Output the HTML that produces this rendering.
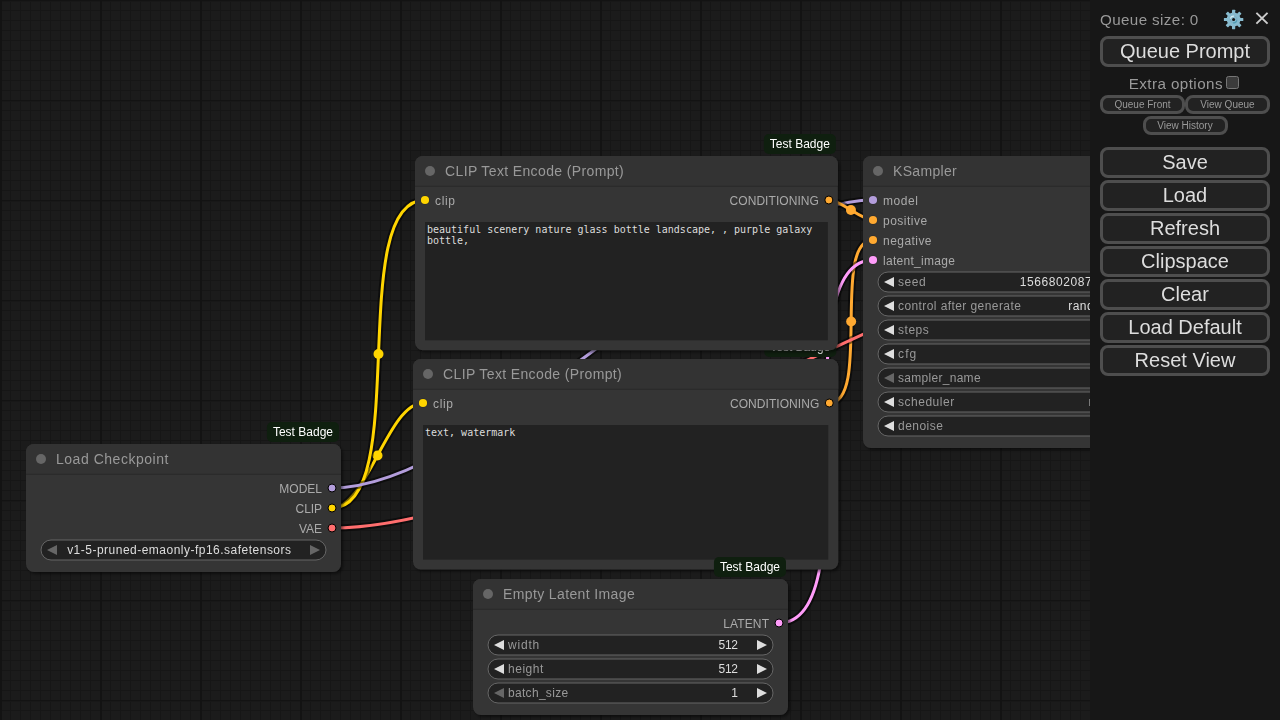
<!DOCTYPE html>
<html><head><meta charset="utf-8"><title>ComfyUI</title>
<style>
html,body{margin:0;padding:0;width:1280px;height:720px;overflow:hidden;background:#171717}
body{position:relative;font-family:"Liberation Sans",sans-serif}
.ta{position:absolute;box-sizing:border-box;margin:0;border:0;outline:0;resize:none;background:transparent;padding:2px;color:#ddd;font:10px/11px "DejaVu Sans Mono","Liberation Mono",monospace;white-space:pre-wrap;overflow:hidden}
.menu{will-change:transform;position:absolute;left:1090px;top:0;width:190px;height:720px;background:#171717;color:#999;font-size:15px}
.menu *{box-sizing:border-box}
.menu button{margin:0;font-family:"Liberation Sans",sans-serif;cursor:pointer;white-space:nowrap}
.menu .b{position:absolute;left:10px;width:170px;height:31px;border:3px solid #4e4e4e;border-radius:8px;background:#222;color:#ddd;font-size:20px;line-height:23px;text-align:center;padding:1px 6px}
.menu .s{position:absolute;width:85px;height:19px;border:3px solid #4e4e4e;border-radius:8px;background:#222;color:#999;font-size:10px;line-height:11px;text-align:center;padding:1px 0}

</style></head><body>
<svg width="1090" height="720" viewBox="0 0 1090 720" style="position:absolute;left:0;top:0;opacity:.999;font-family:'Liberation Sans',sans-serif"><defs>
<pattern id="grid" width="100" height="100" patternUnits="userSpaceOnUse">
<rect width="100" height="100" fill="#1b1b1b"/>
<path d="M10.5 0V100M20.5 0V100M30.5 0V100M40.5 0V100M50.5 0V100M60.5 0V100M70.5 0V100M80.5 0V100M90.5 0V100M0 10.5H100M0 20.5H100M0 30.5H100M0 40.5H100M0 50.5H100M0 60.5H100M0 70.5H100M0 80.5H100M0 90.5H100" stroke="#161616" stroke-width="1"/>
<path d="M1 0V100" stroke="#131313" stroke-width="2"/><path d="M0 .5H100" stroke="#131313" stroke-width="1"/><path d="M2 1.5H100" stroke="#181818" stroke-width="1"/>
</pattern>
<filter id="sh" x="-5%" y="-5%" width="110%" height="115%"><feDropShadow dx="2" dy="2" stdDeviation="1.5" flood-color="#000" flood-opacity="0.5"/></filter>
</defs><rect width="1090" height="720" fill="url(#grid)"/><path d="M332.00 508.00C366.74 508.00 388.26 403.00 423.00 403.00" stroke="rgba(0,0,0,0.5)" stroke-width="7" fill="none"/><path d="M332.00 508.00C366.74 508.00 388.26 403.00 423.00 403.00" stroke="#FFD500" stroke-width="3" fill="none"/><circle cx="377.50" cy="455.50" r="5" fill="#FFD500"/><path d="M332.00 508.00C412.43 508.00 344.57 200.00 425.00 200.00" stroke="rgba(0,0,0,0.5)" stroke-width="7" fill="none"/><path d="M332.00 508.00C412.43 508.00 344.57 200.00 425.00 200.00" stroke="#FFD500" stroke-width="3" fill="none"/><circle cx="378.50" cy="354.00" r="5" fill="#FFD500"/><path d="M332.00 488.00C485.22 488.00 719.78 200.00 873.00 200.00" stroke="rgba(0,0,0,0.5)" stroke-width="7" fill="none"/><path d="M332.00 488.00C485.22 488.00 719.78 200.00 873.00 200.00" stroke="#B39DDB" stroke-width="3" fill="none"/><circle cx="602.50" cy="344.00" r="5" fill="#B39DDB"/><path d="M828.85 200.00C840.96 200.00 860.88 220.00 873.00 220.00" stroke="rgba(0,0,0,0.5)" stroke-width="7" fill="none"/><path d="M828.85 200.00C840.96 200.00 860.88 220.00 873.00 220.00" stroke="#FFA931" stroke-width="3" fill="none"/><circle cx="850.92" cy="210.00" r="5" fill="#FFA931"/><path d="M829.28 403.00C871.47 403.00 830.81 240.00 873.00 240.00" stroke="rgba(0,0,0,0.5)" stroke-width="7" fill="none"/><path d="M829.28 403.00C871.47 403.00 830.81 240.00 873.00 240.00" stroke="#FFA931" stroke-width="3" fill="none"/><circle cx="851.14" cy="321.50" r="5" fill="#FFA931"/><path d="M779.00 623.00C872.74 623.00 779.26 260.00 873.00 260.00" stroke="rgba(0,0,0,0.5)" stroke-width="7" fill="none"/><path d="M779.00 623.00C872.74 623.00 779.26 260.00 873.00 260.00" stroke="#FF9CF9" stroke-width="3" fill="none"/><circle cx="826.00" cy="441.50" r="5" fill="#FF9CF9"/><path d="M1169.00 200.00C1181.51 200.00 1206.49 202.00 1219.00 202.00" stroke="rgba(0,0,0,0.5)" stroke-width="7" fill="none"/><path d="M1169.00 200.00C1181.51 200.00 1206.49 202.00 1219.00 202.00" stroke="#FF9CF9" stroke-width="3" fill="none"/><circle cx="1194.00" cy="201.00" r="5" fill="#FF9CF9"/><path d="M332.00 528.00C566.57 528.00 984.43 222.00 1219.00 222.00" stroke="rgba(0,0,0,0.5)" stroke-width="7" fill="none"/><path d="M332.00 528.00C566.57 528.00 984.43 222.00 1219.00 222.00" stroke="#FF6E6E" stroke-width="3" fill="none"/><circle cx="775.50" cy="375.00" r="5" fill="#FF6E6E"/><rect x="764.23" y="337.00" width="72.05" height="20" rx="5" fill="#0f1f0f"/><text x="770.23" y="351.00" font-size="12" fill="#fff">Test Badge</text><g filter="url(#sh)"><rect x="413.00" y="359.00" width="425.28" height="210.61" rx="8" fill="#353535"/></g><path d="M413.00 389.00V367.00a8 8 0 0 1 8 -8H830.28a8 8 0 0 1 8 8V389.00Z" fill="#333"/><rect x="413.00" y="388.70" width="425.28" height="1.2" fill="rgba(0,0,0,0.2)"/><circle cx="428.00" cy="374.00" r="5" fill="#666"/><text x="443.00" y="379.00" font-size="14" fill="#999" textLength="178.77" lengthAdjust="spacing">CLIP Text Encode (Prompt)</text><circle cx="423.00" cy="403.00" r="4.6" fill="#000" fill-opacity=".25"/><circle cx="423.00" cy="403.00" r="4.1" fill="#FFD500"/><text x="433.00" y="408.00" font-size="12" fill="#aaa" textLength="20.02" lengthAdjust="spacing">clip</text><circle cx="829.28" cy="403.00" r="4" fill="#FFA931" stroke="#000" stroke-width="1"/><text x="819.28" y="408.00" font-size="12" fill="#aaa" text-anchor="end" textLength="89.28" lengthAdjust="spacing">CONDITIONING</text><rect x="423.00" y="425.00" width="405.28" height="134.61" fill="#222"/><rect x="763.80" y="134.00" width="72.05" height="20" rx="5" fill="#0f1f0f"/><text x="769.80" y="148.00" font-size="12" fill="#fff">Test Badge</text><g filter="url(#sh)"><rect x="415.00" y="156.00" width="422.85" height="194.31" rx="8" fill="#353535"/></g><path d="M415.00 186.00V164.00a8 8 0 0 1 8 -8H829.85a8 8 0 0 1 8 8V186.00Z" fill="#333"/><rect x="415.00" y="185.70" width="422.85" height="1.2" fill="rgba(0,0,0,0.2)"/><circle cx="430.00" cy="171.00" r="5" fill="#666"/><text x="445.00" y="176.00" font-size="14" fill="#999" textLength="178.77" lengthAdjust="spacing">CLIP Text Encode (Prompt)</text><circle cx="425.00" cy="200.00" r="4.6" fill="#000" fill-opacity=".25"/><circle cx="425.00" cy="200.00" r="4.1" fill="#FFD500"/><text x="435.00" y="205.00" font-size="12" fill="#aaa" textLength="20.02" lengthAdjust="spacing">clip</text><circle cx="828.85" cy="200.00" r="4" fill="#FFA931" stroke="#000" stroke-width="1"/><text x="818.85" y="205.00" font-size="12" fill="#aaa" text-anchor="end" textLength="89.28" lengthAdjust="spacing">CONDITIONING</text><rect x="425.00" y="222.00" width="402.85" height="118.31" fill="#222"/><rect x="713.95" y="557.00" width="72.05" height="20" rx="5" fill="#0f1f0f"/><text x="719.95" y="571.00" font-size="12" fill="#fff">Test Badge</text><g filter="url(#sh)"><rect x="473.00" y="579.00" width="315.00" height="136.00" rx="8" fill="#353535"/></g><path d="M473.00 609.00V587.00a8 8 0 0 1 8 -8H780.00a8 8 0 0 1 8 8V609.00Z" fill="#333"/><rect x="473.00" y="608.70" width="315.00" height="1.2" fill="rgba(0,0,0,0.2)"/><circle cx="488.00" cy="594.00" r="5" fill="#666"/><text x="503.00" y="599.00" font-size="14" fill="#999" textLength="131.72" lengthAdjust="spacing">Empty Latent Image</text><circle cx="779.00" cy="623.00" r="4" fill="#FF9CF9" stroke="#000" stroke-width="1"/><text x="769.00" y="628.00" font-size="12" fill="#aaa" text-anchor="end" textLength="45.80" lengthAdjust="spacing">LATENT</text><rect x="488.00" y="635.00" width="285.00" height="20" rx="10" fill="#222" stroke="#666" stroke-width="1"/><path d="M504.00 640.00L494.00 645.00L504.00 650.00Z" fill="#ddd"/><path d="M757.00 640.00L767.00 645.00L757.00 650.00Z" fill="#ddd"/><text x="508.00" y="649.00" font-size="12" fill="#999" textLength="31.28" lengthAdjust="spacing">width</text><text x="738.00" y="649.00" font-size="12" fill="#ddd" text-anchor="end" textLength="19.50" lengthAdjust="spacing">512</text><rect x="488.00" y="659.00" width="285.00" height="20" rx="10" fill="#222" stroke="#666" stroke-width="1"/><path d="M504.00 664.00L494.00 669.00L504.00 674.00Z" fill="#ddd"/><path d="M757.00 664.00L767.00 669.00L757.00 674.00Z" fill="#ddd"/><text x="508.00" y="673.00" font-size="12" fill="#999" textLength="35.39" lengthAdjust="spacing">height</text><text x="738.00" y="673.00" font-size="12" fill="#ddd" text-anchor="end" textLength="19.50" lengthAdjust="spacing">512</text><rect x="488.00" y="683.00" width="285.00" height="20" rx="10" fill="#222" stroke="#666" stroke-width="1"/><path d="M504.00 688.00L494.00 693.00L504.00 698.00Z" fill="#666"/><path d="M757.00 688.00L767.00 693.00L757.00 698.00Z" fill="#ddd"/><text x="508.00" y="697.00" font-size="12" fill="#999" textLength="60.12" lengthAdjust="spacing">batch_size</text><text x="738.00" y="697.00" font-size="12" fill="#ddd" text-anchor="end" textLength="4.89" lengthAdjust="spacing">1</text><rect x="1103.95" y="134.00" width="72.05" height="20" rx="5" fill="#0f1f0f"/><text x="1109.95" y="148.00" font-size="12" fill="#fff">Test Badge</text><g filter="url(#sh)"><rect x="863.00" y="156.00" width="315.00" height="292.00" rx="8" fill="#353535"/></g><path d="M863.00 186.00V164.00a8 8 0 0 1 8 -8H1170.00a8 8 0 0 1 8 8V186.00Z" fill="#333"/><rect x="863.00" y="185.70" width="315.00" height="1.2" fill="rgba(0,0,0,0.2)"/><circle cx="878.00" cy="171.00" r="5" fill="#666"/><text x="893.00" y="176.00" font-size="14" fill="#999" textLength="63.78" lengthAdjust="spacing">KSampler</text><circle cx="873.00" cy="200.00" r="4.6" fill="#000" fill-opacity=".25"/><circle cx="873.00" cy="200.00" r="4.1" fill="#B39DDB"/><text x="883.00" y="205.00" font-size="12" fill="#aaa" textLength="34.97" lengthAdjust="spacing">model</text><circle cx="873.00" cy="220.00" r="4.6" fill="#000" fill-opacity=".25"/><circle cx="873.00" cy="220.00" r="4.1" fill="#FFA931"/><text x="883.00" y="225.00" font-size="12" fill="#aaa" textLength="44.12" lengthAdjust="spacing">positive</text><circle cx="873.00" cy="240.00" r="4.6" fill="#000" fill-opacity=".25"/><circle cx="873.00" cy="240.00" r="4.1" fill="#FFA931"/><text x="883.00" y="245.00" font-size="12" fill="#aaa" textLength="48.53" lengthAdjust="spacing">negative</text><circle cx="873.00" cy="260.00" r="4.6" fill="#000" fill-opacity=".25"/><circle cx="873.00" cy="260.00" r="4.1" fill="#FF9CF9"/><text x="883.00" y="265.00" font-size="12" fill="#aaa" textLength="71.86" lengthAdjust="spacing">latent_image</text><circle cx="1169.00" cy="200.00" r="4" fill="#FF9CF9" stroke="#000" stroke-width="1"/><text x="1159.00" y="205.00" font-size="12" fill="#aaa" text-anchor="end" textLength="45.80" lengthAdjust="spacing">LATENT</text><rect x="878.00" y="272.00" width="285.00" height="20" rx="10" fill="#222" stroke="#666" stroke-width="1"/><path d="M894.00 277.00L884.00 282.00L894.00 287.00Z" fill="#ddd"/><path d="M1147.00 277.00L1157.00 282.00L1147.00 287.00Z" fill="#ddd"/><text x="898.00" y="286.00" font-size="12" fill="#999" textLength="27.69" lengthAdjust="spacing">seed</text><text x="1128.00" y="286.00" font-size="12" fill="#ddd" text-anchor="end" textLength="108.30" lengthAdjust="spacing">156680208700286</text><rect x="878.00" y="296.00" width="285.00" height="20" rx="10" fill="#222" stroke="#666" stroke-width="1"/><path d="M894.00 301.00L884.00 306.00L894.00 311.00Z" fill="#ddd"/><path d="M1147.00 301.00L1157.00 306.00L1147.00 311.00Z" fill="#ddd"/><text x="898.00" y="310.00" font-size="12" fill="#999" textLength="122.84" lengthAdjust="spacing">control after generate</text><text x="1128.00" y="310.00" font-size="12" fill="#ddd" text-anchor="end" textLength="59.77" lengthAdjust="spacing">randomize</text><rect x="878.00" y="320.00" width="285.00" height="20" rx="10" fill="#222" stroke="#666" stroke-width="1"/><path d="M894.00 325.00L884.00 330.00L894.00 335.00Z" fill="#ddd"/><path d="M1147.00 325.00L1157.00 330.00L1147.00 335.00Z" fill="#ddd"/><text x="898.00" y="334.00" font-size="12" fill="#999" textLength="30.83" lengthAdjust="spacing">steps</text><text x="1128.00" y="334.00" font-size="12" fill="#ddd" text-anchor="end" textLength="14.89" lengthAdjust="spacing">20</text><rect x="878.00" y="344.00" width="285.00" height="20" rx="10" fill="#222" stroke="#666" stroke-width="1"/><path d="M894.00 349.00L884.00 354.00L894.00 359.00Z" fill="#ddd"/><path d="M1147.00 349.00L1157.00 354.00L1147.00 359.00Z" fill="#ddd"/><text x="898.00" y="358.00" font-size="12" fill="#999" textLength="18.31" lengthAdjust="spacing">cfg</text><text x="1128.00" y="358.00" font-size="12" fill="#ddd" text-anchor="end" textLength="17.89" lengthAdjust="spacing">8.0</text><rect x="878.00" y="368.00" width="285.00" height="20" rx="10" fill="#222" stroke="#666" stroke-width="1"/><path d="M894.00 373.00L884.00 378.00L894.00 383.00Z" fill="#666"/><path d="M1147.00 373.00L1157.00 378.00L1147.00 383.00Z" fill="#ddd"/><text x="898.00" y="382.00" font-size="12" fill="#999" textLength="82.58" lengthAdjust="spacing">sampler_name</text><text x="1128.00" y="382.00" font-size="12" fill="#ddd" text-anchor="end" textLength="28.52" lengthAdjust="spacing">euler</text><rect x="878.00" y="392.00" width="285.00" height="20" rx="10" fill="#222" stroke="#666" stroke-width="1"/><path d="M894.00 397.00L884.00 402.00L894.00 407.00Z" fill="#ddd"/><path d="M1147.00 397.00L1157.00 402.00L1147.00 407.00Z" fill="#ddd"/><text x="898.00" y="406.00" font-size="12" fill="#999" textLength="56.16" lengthAdjust="spacing">scheduler</text><text x="1128.00" y="406.00" font-size="12" fill="#ddd" text-anchor="end" textLength="39.16" lengthAdjust="spacing">normal</text><rect x="878.00" y="416.00" width="285.00" height="20" rx="10" fill="#222" stroke="#666" stroke-width="1"/><path d="M894.00 421.00L884.00 426.00L894.00 431.00Z" fill="#ddd"/><path d="M1147.00 421.00L1157.00 426.00L1147.00 431.00Z" fill="#ddd"/><text x="898.00" y="430.00" font-size="12" fill="#999" textLength="44.88" lengthAdjust="spacing">denoise</text><text x="1128.00" y="430.00" font-size="12" fill="#ddd" text-anchor="end" textLength="23.19" lengthAdjust="spacing">1.00</text><rect x="266.95" y="422.00" width="72.05" height="20" rx="5" fill="#0f1f0f"/><text x="272.95" y="436.00" font-size="12" fill="#fff">Test Badge</text><g filter="url(#sh)"><rect x="26.00" y="444.00" width="315.00" height="128.00" rx="8" fill="#353535"/></g><path d="M26.00 474.00V452.00a8 8 0 0 1 8 -8H333.00a8 8 0 0 1 8 8V474.00Z" fill="#333"/><rect x="26.00" y="473.70" width="315.00" height="1.2" fill="rgba(0,0,0,0.2)"/><circle cx="41.00" cy="459.00" r="5" fill="#666"/><text x="56.00" y="464.00" font-size="14" fill="#999" textLength="112.39" lengthAdjust="spacing">Load Checkpoint</text><circle cx="332.00" cy="488.00" r="4" fill="#B39DDB" stroke="#000" stroke-width="1"/><text x="322.00" y="493.00" font-size="12" fill="#aaa" text-anchor="end" textLength="42.69" lengthAdjust="spacing">MODEL</text><circle cx="332.00" cy="508.00" r="4" fill="#FFD500" stroke="#000" stroke-width="1"/><text x="322.00" y="513.00" font-size="12" fill="#aaa" text-anchor="end" textLength="26.44" lengthAdjust="spacing">CLIP</text><circle cx="332.00" cy="528.00" r="4" fill="#FF6E6E" stroke="#000" stroke-width="1"/><text x="322.00" y="533.00" font-size="12" fill="#aaa" text-anchor="end" textLength="22.95" lengthAdjust="spacing">VAE</text><rect x="41.00" y="540.00" width="285.00" height="20" rx="10" fill="#222" stroke="#666" stroke-width="1"/><path d="M57.00 545.00L47.00 550.00L57.00 555.00Z" fill="#666"/><path d="M310.00 545.00L320.00 550.00L310.00 555.00Z" fill="#666"/><text x="291.00" y="554.00" font-size="12" fill="#ddd" text-anchor="end" textLength="223.86" lengthAdjust="spacing">v1-5-pruned-emaonly-fp16.safetensors</text></svg>
<textarea class="ta" spellcheck="false" style="left:425.00px;top:222.00px;width:402.85px;height:118.31px">beautiful scenery nature glass bottle landscape, , purple galaxy bottle,</textarea>
<textarea class="ta" spellcheck="false" style="left:423.00px;top:425.00px;width:405.28px;height:134.61px">text, watermark</textarea>
<div class="menu">
<span style="position:absolute;left:10px;top:11px;font-size:15.2px;letter-spacing:.38px;line-height:18px">Queue size: 0</span>
<svg style="position:absolute;left:133px;top:9px" width="21" height="21" viewBox="-10.6 -10.5 21 21"><g fill="#88bbcf"><circle r="6.9"/><rect x="-1.6" y="-9.7" width="3.2" height="19.4" rx=".4"/><rect x="-9.7" y="-1.6" width="19.4" height="3.2" rx=".4"/><g transform="rotate(45)"><rect x="-1.6" y="-9.7" width="3.2" height="19.4" rx=".4"/><rect x="-9.7" y="-1.6" width="19.4" height="3.2" rx=".4"/></g></g><circle r="3.3" fill="none" stroke="#7db1c6" stroke-width="1.3"/><path d="M-3.2 -0.8A3.3 3.3 0 0 1 0.6 -3.25" fill="none" stroke="#d8eef5" stroke-width="1.1"/><path d="M3.2 0.8A3.3 3.3 0 0 1 -0.6 3.25" fill="none" stroke="#4f9db5" stroke-width="1.1"/><circle r="1.55" fill="#171717"/></svg>
<span style="position:absolute;left:162.7px;top:-1.9px;font:22px/40px 'DejaVu Sans',sans-serif;color:#ccc">×</span>
<button class="b" style="top:36px">Queue Prompt</button>
<label style="position:absolute;left:38.8px;top:75px;font-size:15.2px;letter-spacing:.42px;line-height:18px">Extra options</label>
<input type="checkbox" style="position:absolute;left:136px;top:76px;width:13px;height:13px;margin:0;appearance:none;-webkit-appearance:none;border:1px solid #767676;border-radius:2.5px;background:#3b3b3b">
<button class="s" style="left:10px;top:95px">Queue Front</button>
<button class="s" style="left:95px;top:95px">View Queue</button>
<button class="s" style="left:52.5px;top:116px">View History</button>
<button class="b" style="top:147px">Save</button>
<button class="b" style="top:180px">Load</button>
<button class="b" style="top:213px">Refresh</button>
<button class="b" style="top:246px">Clipspace</button>
<button class="b" style="top:279px">Clear</button>
<button class="b" style="top:312px">Load Default</button>
<button class="b" style="top:345px">Reset View</button>
</div>

</body></html>
